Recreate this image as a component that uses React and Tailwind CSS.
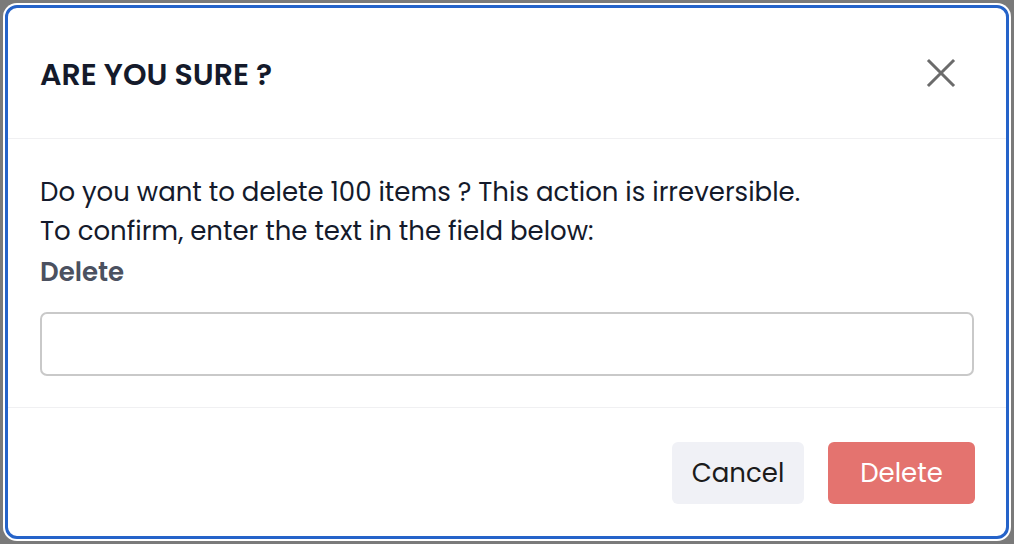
export default function App() {
  return (
    <div className="h-[544px] w-[1014px] bg-[#7a7a7a] p-[3px]" style={{ fontFamily: '"Poppins", "Open Sans", sans-serif' }}>
      <div className="h-full rounded-[14px] bg-white p-[2px]">
        <div className="flex h-full flex-col rounded-[12px] border-[3px] border-[#2563c9] bg-white">
          <div className="flex h-[131px] items-center justify-between border-b border-[#f0f0f2] pl-[32px] pr-[50px]">
            <h2 className="pt-[2px] text-[30px] font-semibold text-[#141a2b]">ARE YOU SURE ?</h2>
            <button className="text-[#6b6b6b]">
              <svg width="30" height="30" viewBox="0 0 30 30" fill="none" stroke="currentColor" strokeWidth="3" strokeLinecap="square">
                <path d="M3 3L27 27M27 3L3 27" />
              </svg>
            </button>
          </div>
          <div className="flex h-[269px] flex-col border-b border-[#f0f0f2] px-[32px] pt-[34px]">
            <p className="text-[26px] leading-[39px] text-[#141a2b]">Do you want to delete 100 items ? This action is irreversible.</p>
            <p className="text-[26px] leading-[39px] text-[#141a2b]">To confirm, enter the text in the field below:</p>
            <p className="mt-[2px] text-[26px] font-semibold leading-[39px] text-[#4b5160]">Delete</p>
            <input type="text" className="mt-[20px] h-[64px] w-full rounded-[7px] border-2 border-[#c9c9c9] px-4 text-[24px] outline-none" />
          </div>
          <div className="flex flex-1 items-start justify-end gap-[24px] pl-[32px] pr-[31px] pt-[34px]">
            <button className="h-[62px] w-[132px] rounded-[6px] bg-[#f0f1f6] text-[26px] text-[#1b1b1b]">Cancel</button>
            <button className="h-[62px] w-[147px] rounded-[6px] bg-[#e4736f] text-[26px] text-white">Delete</button>
          </div>
        </div>
      </div>
    </div>
  );
}
